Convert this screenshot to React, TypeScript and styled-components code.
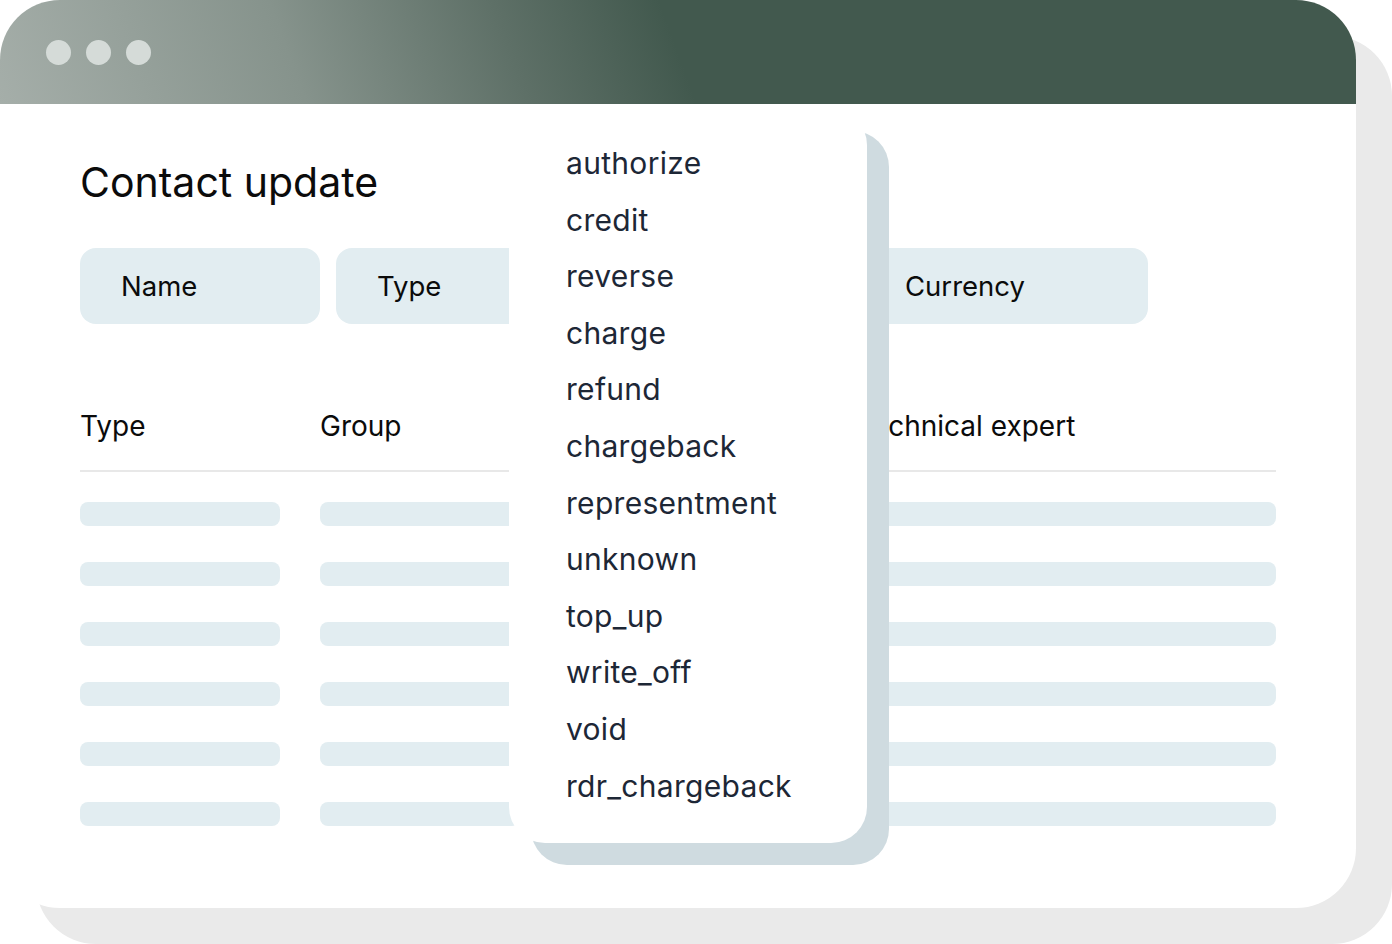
import React from 'react';
import styled, { createGlobalStyle } from 'styled-components';

const GlobalStyle = createGlobalStyle`
  html, body {
    margin: 0;
    padding: 0;
    background: #fff;
    overflow: hidden;
  }
  body {
    font-family: 'Inter', 'Noto Sans', sans-serif;
  }
`

const Page = styled.div`
  width: 1392px;
  height: 944px;
`

const Window = styled.div`
  position: relative;
  width: 1356px;
  height: 908px;
  background: #fff;
  border-radius: 60px;
  overflow: hidden;
  box-shadow: 36px 36px 0 0 #eaeaea;
`

const TitleBar = styled.div`
  display: flex;
  align-items: center;
  gap: 15px;
  height: 104px;
  padding-left: 46px;
  box-sizing: border-box;
  background: linear-gradient(70deg, #a5aea9 0%, #86938c 22%, #5e7067 38%, #42594e 50%, #42594e 100%);
`

const Dot = styled.span`
  width: 25px;
  height: 25px;
  border-radius: 50%;
  background: #d5dbd8;
`

const Content = styled.div`
  padding: 56px 80px 0 80px;
`

const Heading = styled.h1`
  margin: 0 0 44px;
  font-size: 41px;
  line-height: 44px;
  font-weight: 400;
  color: #0b0b0b;
`

const Filters = styled.div`
  display: flex;
  gap: 16px;
`

const Chip = styled.div<{ $width: number }>`
  display: flex;
  align-items: center;
  width: ${p => p.$width}px;
  height: 76px;
  padding-left: 41px;
  box-sizing: border-box;
  border-radius: 16px;
  background: #e2edf1;
  font-size: 27.5px;
  color: #0b0b0b;
`

const Table = styled.div`
  margin-top: 86px;
`

const Columns = styled.div`
  display: grid;
  grid-template-columns: 240px 240px 296px 1fr;
`

const HeadRow = styled(Columns)`
  padding-bottom: 28px;
  border-bottom: 2px solid #e8e8e8;
`

const HeadCell = styled.div`
  font-size: 28px;
  line-height: 32px;
  color: #0b0b0b;
`

const Body = styled.div`
  display: flex;
  flex-direction: column;
  gap: 36px;
  padding-top: 30px;
`

const Bar = styled.div<{ $full?: boolean }>`
  width: ${p => (p.$full ? '100%' : '200px')};
  height: 24px;
  border-radius: 8px;
  background: #e2edf1;
`

const Menu = styled.ul`
  position: absolute;
  left: 509px;
  top: 109px;
  width: 358px;
  height: 734px;
  margin: 0;
  padding: 26px 0 0 57px;
  box-sizing: border-box;
  list-style: none;
  background: #fff;
  border-radius: 36px;
  box-shadow: 22px 22px 0 0 #cfdbe0;
`

const MenuItem = styled.li`
  font-size: 30px;
  letter-spacing: 0.3px;
  line-height: 56.6px;
  color: #1d2736;
`

const options = [
  'authorize',
  'credit',
  'reverse',
  'charge',
  'refund',
  'chargeback',
  'representment',
  'unknown',
  'top_up',
  'write_off',
  'void',
  'rdr_chargeback',
];

const App: React.FC = () => {
  return (
    <Page>
      <GlobalStyle />
      <Window>
        <TitleBar>
          <Dot />
          <Dot />
          <Dot />
        </TitleBar>
        <Content>
          <Heading>Contact update</Heading>
          <Filters>
            <Chip $width={240}>Name</Chip>
            <Chip $width={240}>Type</Chip>
            <Chip $width={256} />
            <Chip $width={284}>Currency</Chip>
          </Filters>
          <Table>
            <HeadRow>
              <HeadCell>Type</HeadCell>
              <HeadCell>Group</HeadCell>
              <HeadCell />
              <HeadCell>Technical expert</HeadCell>
            </HeadRow>
            <Body>
              {Array.from({ length: 6 }).map((_, i) => (
                <Columns key={i}>
                  <Bar />
                  <Bar />
                  <Bar />
                  <Bar $full />
                </Columns>
              ))}
            </Body>
          </Table>
        </Content>
        <Menu>
          {options.map(o => (
            <MenuItem key={o}>{o}</MenuItem>
          ))}
        </Menu>
      </Window>
    </Page>
  )
}

export default App;
